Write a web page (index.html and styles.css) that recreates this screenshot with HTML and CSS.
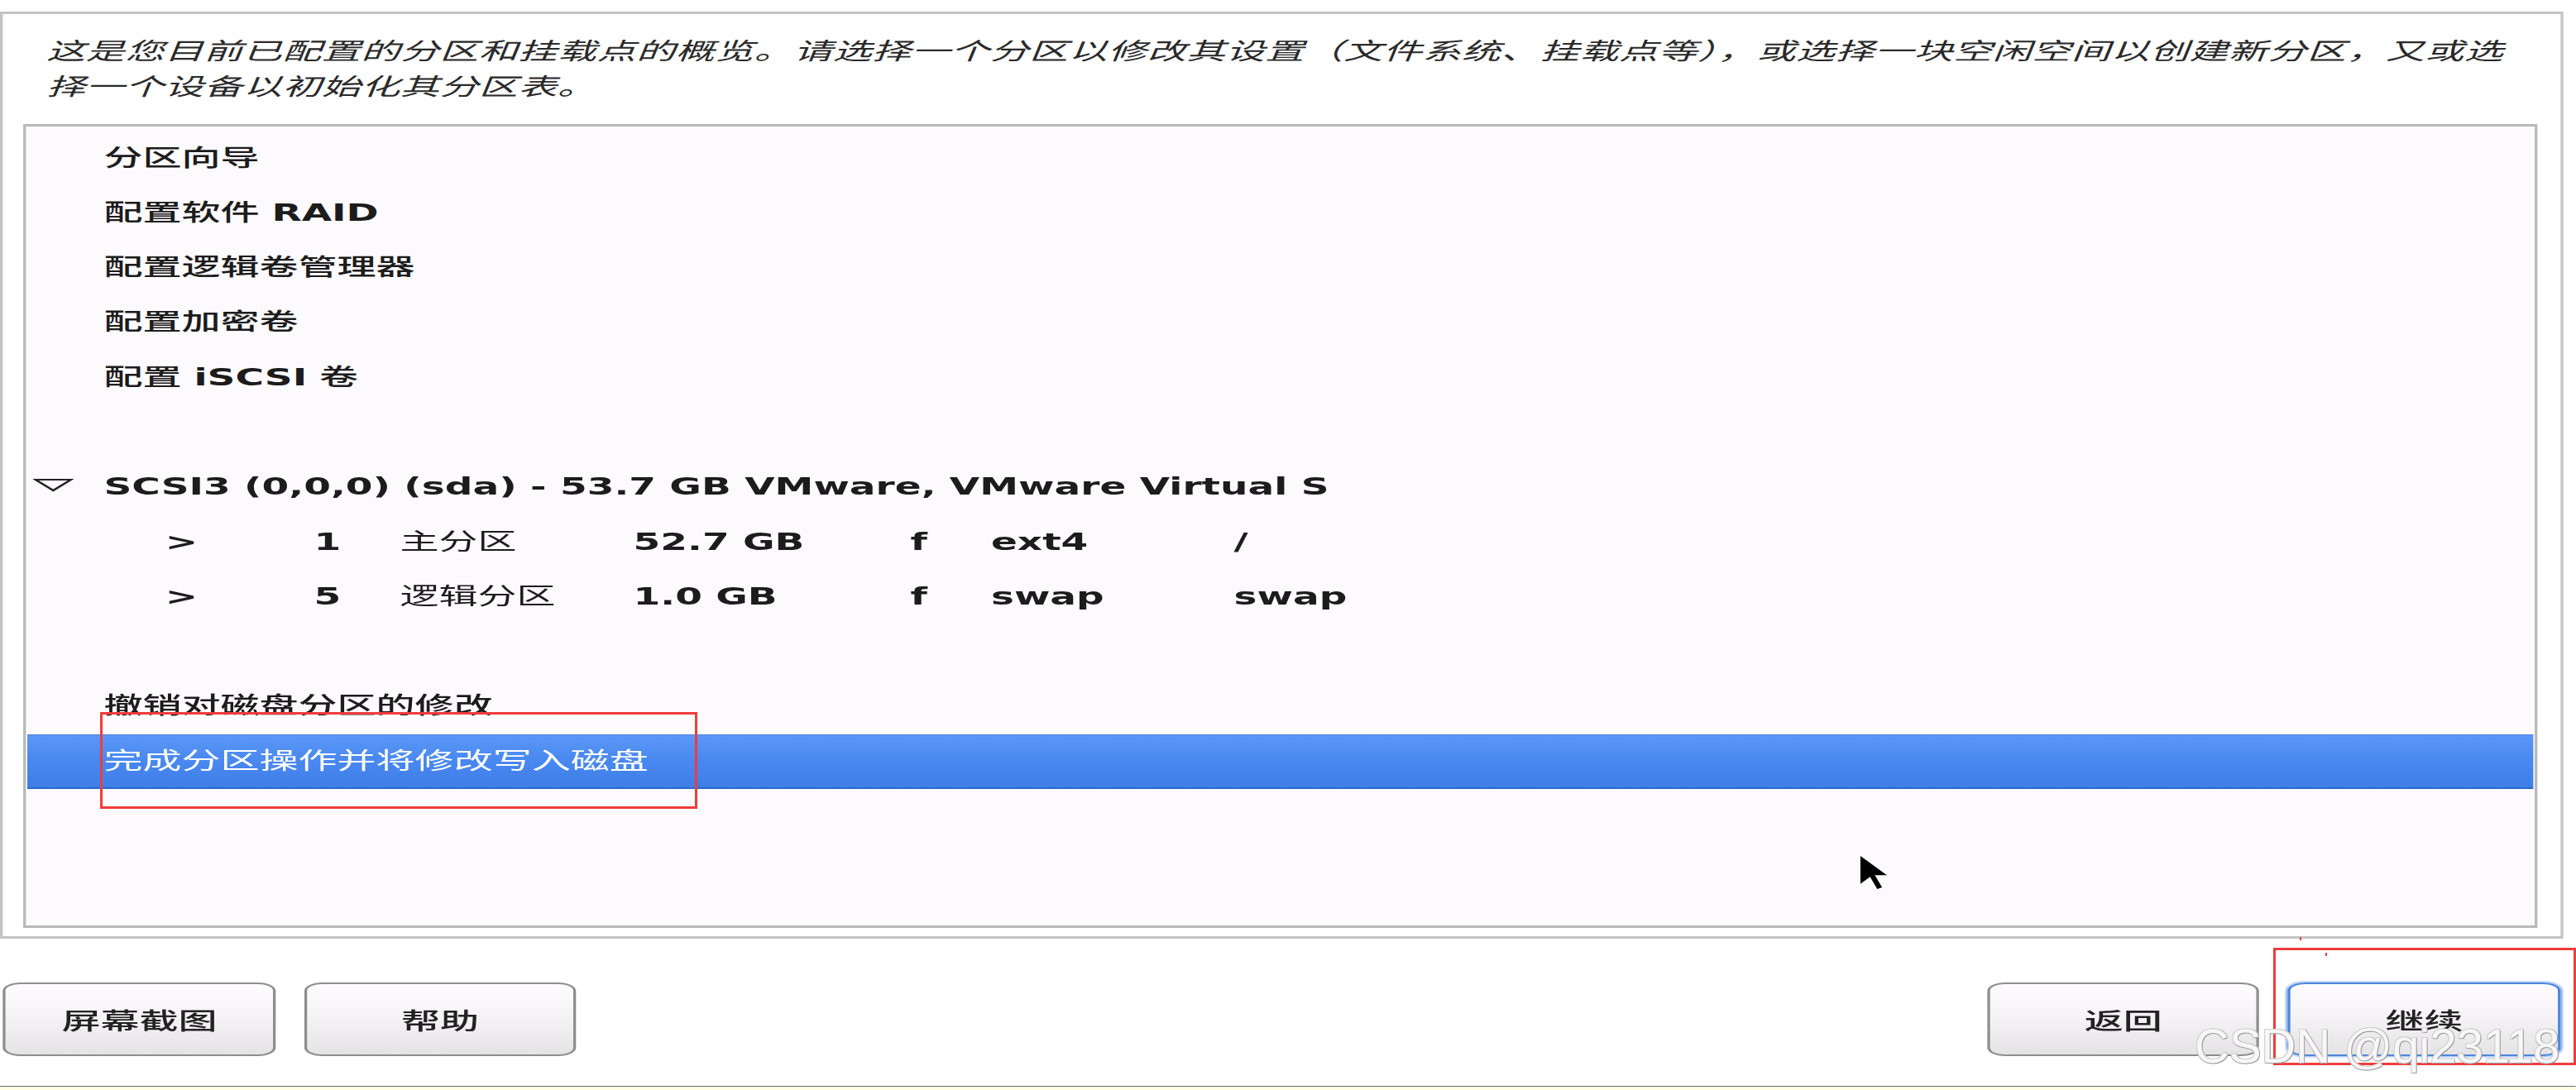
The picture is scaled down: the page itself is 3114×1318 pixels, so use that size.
FILE: index.html
```html
<!doctype html>
<html>
  <head>
    <title>分区概览</title>
    <meta charset="utf-8">
    <link rel="stylesheet" href="styles.css">
  </head>
  <body>
    <div class="screen">
      <div class="frame">
        <p class="intro">这是您目前已配置的分区和挂载点的概览。请选择一个分区以修改其设置（文件系统、挂载点等），或选择一块空闲空间以创建新分区，又或选<br>择一个设备以初始化其分区表。</p>
        <ul class="list">
          <li>分区向导</li>
          <li>配置软件 <b>RAID</b></li>
          <li>配置逻辑卷管理器</li>
          <li>配置加密卷</li>
          <li>配置 <b>iSCSI</b> 卷</li>
          <li class="blank"></li>
          <li class="disk">
            <svg class="toggle" viewBox="0 0 30 17"><polygon points="2,2 28,2 15,15"/></svg>
            <b>SCSI3 (0,0,0) (sda) - 53.7 GB VMware, VMware Virtual S</b>
          </li>
          <li class="part"><b>&gt;</b><b>1</b><span>主分区</span><b>52.7 GB</b><b>f</b><b>ext4</b><b>/</b></li>
          <li class="part"><b>&gt;</b><b>5</b><span>逻辑分区</span><b>1.0 GB</b><b>f</b><b>swap</b><b>swap</b></li>
          <li class="blank"></li>
          <li>撤销对磁盘分区的修改</li>
          <li class="selected">完成分区操作并将修改写入磁盘</li>
        </ul>
      </div>
      <div class="buttons">
        <div class="group">
          <button>屏幕截图</button>
          <button>帮助</button>
        </div>
        <div class="group">
          <button>返回</button>
          <button class="focus">继续</button>
        </div>
      </div>
      <div class="status"></div>
    </div>

    <svg class="cursor" viewBox="0 0 11 19" preserveAspectRatio="none"><path d="M0 0 L0 16 L4 12 L7 19 L9 18 L6 11 L11 11 Z"/></svg>
    <div class="mark mark-a"></div>
    <div class="mark mark-b"></div>
    <div class="dot dot-a"></div>
    <div class="dot dot-b"></div>
    <div class="watermark">CSDN @qi23118</div>
  </body>
</html>
```

FILE: styles.css
```css
* {
  box-sizing: border-box;
}
body {
  margin: 0;
  height: 1318px;
  overflow: hidden;
  position: relative;
  background: #fff;
  font-family: "DejaVu Sans", "Noto Sans CJK SC", sans-serif;
}

/* the installer screen is stretched sideways in the capture */
.screen {
  width: 1887.27px;
  height: 1318px;
  padding-top: 14px;
  display: flex;
  flex-direction: column;
  transform: scaleX(1.65);
  transform-origin: 0 0;
}
.frame {
  width: 1878px;
  border: solid #c4c4c4;
  border-width: 3px 2px;
  padding: 0 17px 10px 15px;
  background: #fff;
}
.intro {
  margin: 0;
  padding: 23.5px 0 23.5px 17px;
  font-size: 28.5px;
  line-height: 43px;
  letter-spacing: 0.3px;
  font-style: italic;
  color: #2a2a2a;
  white-space: nowrap;
}

.list {
  list-style: none;
  margin: 0;
  height: 972px;
  padding: 5.5px 1px 0;
  border: solid #b9b9b9;
  border-width: 3px 2px;
  background: #fdfafd;
}
.list li {
  height: 66.3px;
  line-height: 66.3px;
  padding-left: 56px;
  font-size: 28.5px;
  font-weight: 500;
  color: #1c1c1c;
  white-space: nowrap;
}
.list b {
  font-weight: 700;
}
.list .disk {
  display: flex;
  align-items: center;
  padding-left: 4px;
}
.toggle {
  width: 30px;
  height: 17px;
  margin: 0 22px 6px 0;
  fill: none;
  stroke: #222;
  stroke-width: 2;
}
.list .part {
  display: grid;
  grid-template-columns: 109px 63px 171px 203px 59px 178px auto;
  padding-left: 101px;
}
.list .part span {
  font-weight: 400;
}
.list .selected {
  line-height: 63.3px;
  background: linear-gradient(#5b97f6, #4a89f0 45%, #3e7ee8);
  border-top: 1px solid #4c82d6;
  border-bottom: 2px solid #2d68cd;
  color: #fff;
  font-weight: 400;
}

.buttons {
  height: 178px;
  display: flex;
  justify-content: space-between;
  padding: 53px 11.5px 0 2.4px;
}
.group {
  display: flex;
  gap: 21px;
  align-items: flex-start;
}
button {
  width: 199.4px;
  height: 89px;
  padding: 0;
  border: 2px solid #8e8e8e;
  border-radius: 13px / 10px;
  background: linear-gradient(#fefcfe, #f4f2f4 50%, #e5e3e5);
  font: 500 28.5px "Noto Sans CJK SC", sans-serif;
  color: #222;
}
.focus {
  border-color: #4f86dc;
  box-shadow: 0 0 2px 1px #8fb4ee;
}
.status {
  height: 5px;
  border-top: 1px solid #6b6b6b;
  background: #fffde2;
}

/* overlays drawn on top of the capture */
.cursor {
  position: absolute;
  left: 2249px;
  top: 1035px;
  width: 32px;
  height: 40px;
  fill: #000;
}
.mark {
  position: absolute;
  border: 3px solid #f03c3c;
}
.mark-a {
  left: 121px;
  top: 861px;
  width: 722px;
  height: 117px;
}
.mark-b {
  left: 2748px;
  top: 1146px;
  width: 366px;
  height: 142px;
}
.dot {
  position: absolute;
  width: 2px;
  height: 4px;
  background: #f03c3c;
}
.dot-a {
  left: 2780px;
  top: 1133px;
}
.dot-b {
  left: 2811px;
  top: 1152px;
}
.watermark {
  position: absolute;
  left: 2653px;
  top: 1236px;
  font: 58px/1 "Liberation Sans", Arial, sans-serif;
  color: #f7f7f7;
  text-shadow: 1px 1px 0 #9a9a9a, -1px -1px 0 #d2d2d2, 1px -1px 0 #c2c2c2, -1px 1px 0 #c2c2c2;
  white-space: nowrap;
}
```
